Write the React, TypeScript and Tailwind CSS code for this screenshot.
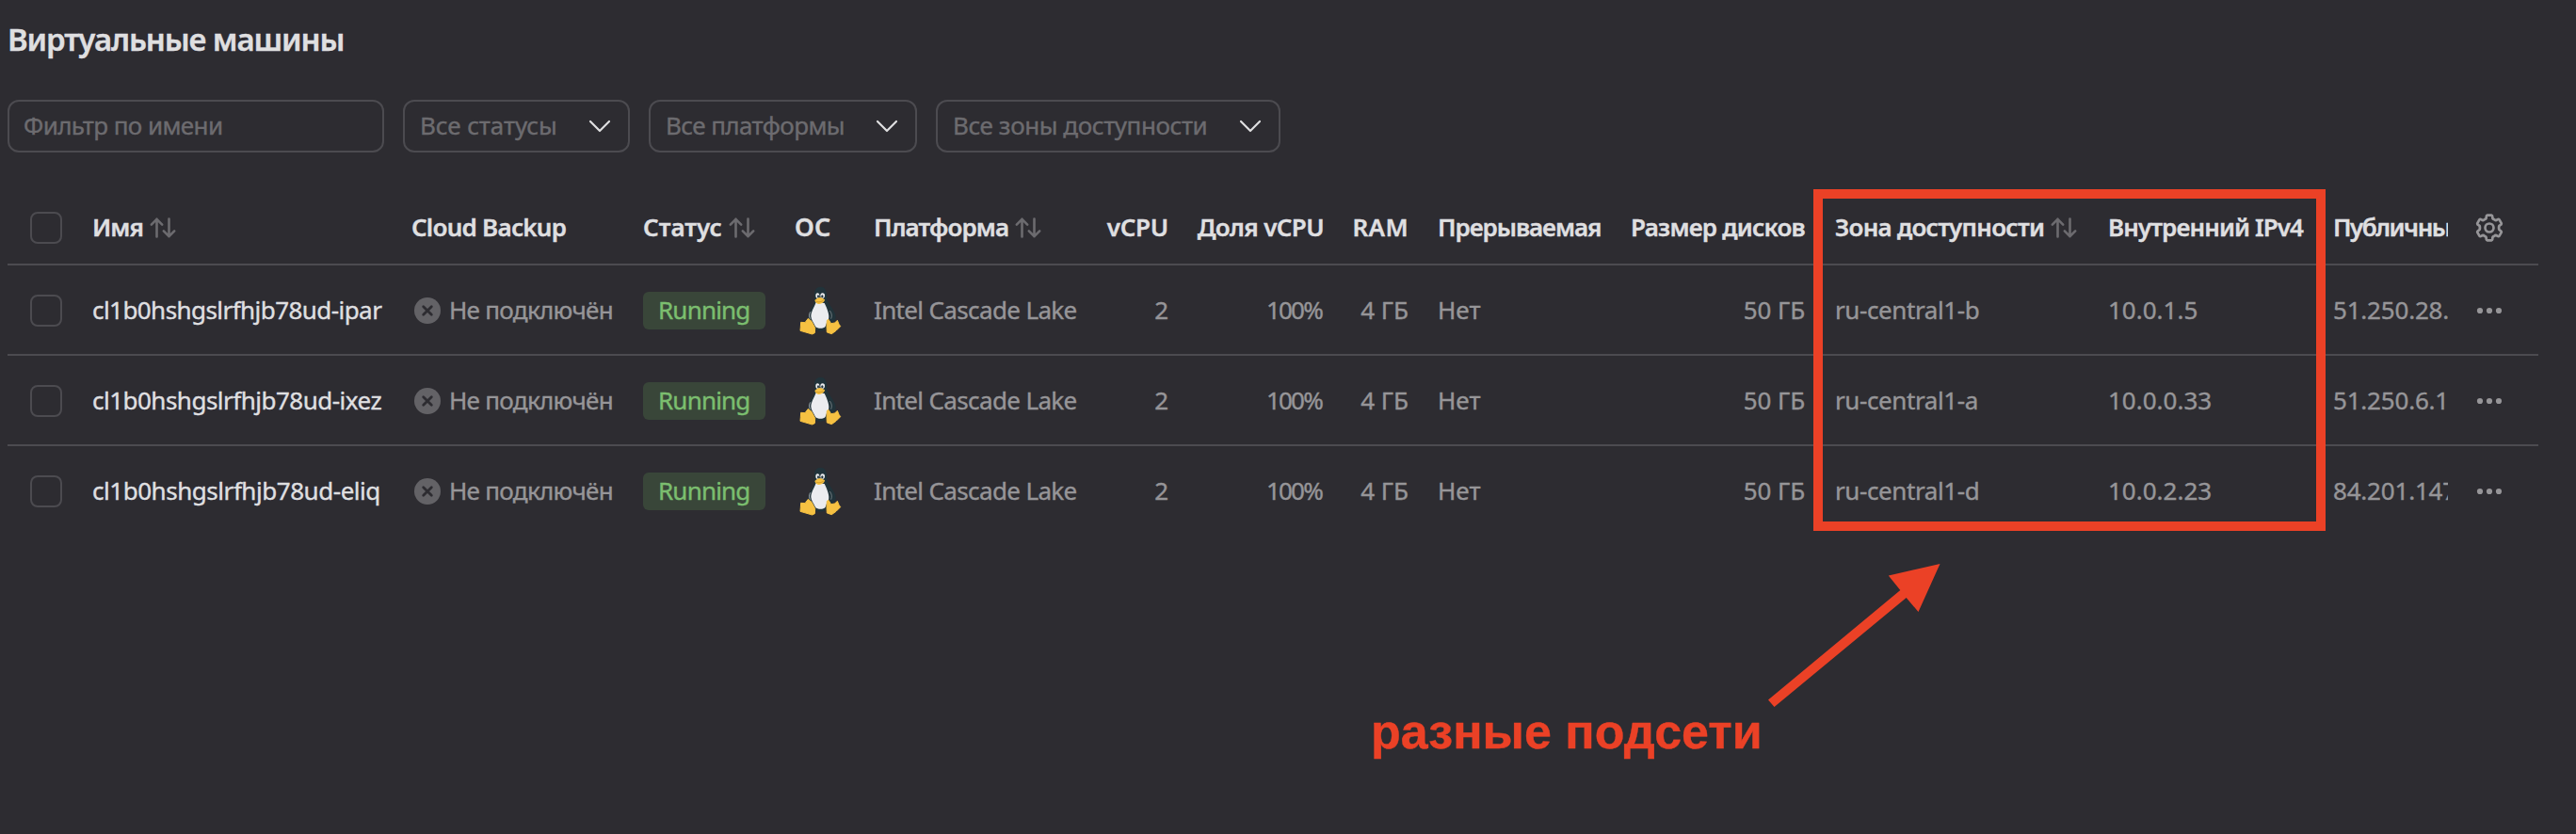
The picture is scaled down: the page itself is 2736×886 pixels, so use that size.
import type { ReactNode } from "react";
import clsx from "clsx";

const COLUMNS =
  "grid grid-cols-[90px_339px_246px_161px_84px_202px_111px_165px_90px_214px_207px_322px_239px_122px_96px] items-center pt-0.5";

const VMS = [
  { name: "cl1b0hshgslrfhjb78ud-ipar", tracking: "tracking-[-0.56px]", zone: "ru-central1-b", ip: "10.0.1.5", publicIp: "51.250.28." },
  { name: "cl1b0hshgslrfhjb78ud-ixez", tracking: "tracking-[-0.51px]", zone: "ru-central1-a", ip: "10.0.0.33", publicIp: "51.250.6.1" },
  { name: "cl1b0hshgslrfhjb78ud-eliq", tracking: "tracking-[-0.46px]", zone: "ru-central1-d", ip: "10.0.2.23", publicIp: "84.201.147" },
];

const FILTERS = [
  { label: "Все статусы", tracking: "tracking-[-0.1px]", width: "w-[241px]" },
  { label: "Все платформы", tracking: "tracking-[-0.6px]", width: "w-[285px]" },
  { label: "Все зоны доступности", tracking: "tracking-[-0.42px]", width: "w-[366px]" },
];

function Cell({ children, className }: { children: ReactNode; className?: string }) {
  return <div className={clsx("flex items-center pb-0.5 whitespace-nowrap", className)}>{children}</div>;
}

function Checkbox() {
  return <div className="ml-6 size-[34px] rounded-[8px] border-2 border-[#4c4b50]" />;
}

function SortIcon() {
  return (
    <svg
      className="mt-0.5 ml-1.5 h-6 w-[30px] shrink-0"
      viewBox="0 0 30 24"
      fill="none"
      stroke="#6c6b6f"
      strokeWidth="2.6"
      strokeLinecap="round"
      strokeLinejoin="round"
    >
      <path d="M8.5 21.5V2.8M2.8 8.6L8.5 2.8L14.2 8.6" />
      <path d="M21.5 2.5V21.2M15.8 15.4L21.5 21.2L27.2 15.4" />
    </svg>
  );
}

function Chevron() {
  return (
    <svg
      className="h-3.5 w-6"
      viewBox="0 0 24 14"
      fill="none"
      stroke="#dfdfe0"
      strokeWidth="2.2"
      strokeLinecap="round"
      strokeLinejoin="round"
    >
      <path d="M2 2L12 12L22 2" />
    </svg>
  );
}

function NotConnectedIcon() {
  return (
    <svg className="mt-0.5 size-7 shrink-0" viewBox="0 0 28 28">
      <circle cx="14" cy="14" r="14" fill="#636266" />
      <path d="M9.7 9.7L18.3 18.3M18.3 9.7L9.7 18.3" stroke="#2d2c31" strokeWidth="2.8" strokeLinecap="round" />
    </svg>
  );
}

function gearPath() {
  const at = (deg: number, r: number) => {
    const a = ((deg - 90) * Math.PI) / 180;
    return `${(16 + r * Math.cos(a)).toFixed(2)} ${(16 + r * Math.sin(a)).toFixed(2)}`;
  };
  let d = `M${at(-9, 13.6)}`;
  for (let k = 0; k < 6; k++) {
    const b = k * 60;
    d += `L${at(b + 9, 13.6)}Q${at(b + 14, 13.6)} ${at(b + 16, 12)}`;
    d += `Q${at(b + 18, 9.8)} ${at(b + 30, 10.2)}Q${at(b + 42, 9.8)} ${at(b + 44, 12)}`;
    d += `Q${at(b + 46, 13.6)} ${at(b + 51, 13.6)}`;
  }
  return `${d}Z`;
}

function GearIcon() {
  return (
    <svg className="ml-7 size-8" viewBox="0 0 32 32" fill="none" stroke="#969598" strokeWidth="2.7" strokeLinejoin="round">
      <path d={gearPath()} />
      <circle cx="16" cy="16" r="4.5" />
    </svg>
  );
}

function DotsIcon() {
  return (
    <svg className="ml-7 size-8" viewBox="0 0 32 32" fill="#969598">
      <circle cx="6" cy="16" r="3.1" />
      <circle cx="16" cy="16" r="3.1" />
      <circle cx="26" cy="16" r="3.1" />
    </svg>
  );
}

function Tux() {
  return (
    <svg className="-mt-0.5 -ml-1 h-[62px] w-[60px]" viewBox="0 0 180 186">
      <path
        d="M94 20C80 20 75 31 75 44C75 62 77 70 68 84C60 96 54 110 55 124L72 148C76 158 84 161 94 161C106 161 112 158 116 148L126 134C134 136 142 128 143 116C142 98 124 82 118 66C113 54 116 46 113 36C110 25 104 20 94 20Z"
        fill="#21333a"
      />
      <path
        d="M80 70C74 86 64 100 64 114C65 126 72 134 78 146C84 154 104 155 110 146C114 138 114 130 120 124C124 110 116 90 107 72Z"
        fill="#ebecef"
      />
      <path d="M62 100C58 108 57 116 62 122" stroke="#ebecef" strokeWidth="2" fill="none" />
      <path d="M124 96C130 104 132 112 128 122" stroke="#8f989c" strokeWidth="2" fill="none" />
      <ellipse cx="85" cy="48" rx="6" ry="8.5" fill="#ebecef" />
      <ellipse cx="101" cy="48" rx="7" ry="8.5" fill="#ebecef" />
      <ellipse cx="87" cy="50" rx="3" ry="4.5" fill="#21333a" />
      <ellipse cx="100" cy="50" rx="3.4" ry="4.5" fill="#21333a" />
      <path d="M76 63C82 58 88 54 93 54C98 54 103 58 108 61C108 68 98 75 90 75C83 75 77 70 76 63Z" fill="#f6c142" />
      <path d="M80 66C88 71 98 68 104 63" stroke="#b98318" strokeWidth="2" fill="none" />
      <g fill="#f6c142" stroke="#f6c142" strokeWidth="3" strokeLinejoin="round">
        <path d="M32 133L45 134L55 121L66 130L77 151L76 167L68 171L30 160L31 148Z" />
        <path d="M115 127L120 124L128 137L140 135L148 127L153 139L158 146L144 160L130 170L115 165L114 146Z" />
      </g>
    </svg>
  );
}

function Filters() {
  return (
    <div className="flex gap-5">
      <div className="flex h-14 w-[400px] items-center rounded-[12px] border-2 border-[#4c4b50] pb-0.5 pl-[15px] text-[#6c6b6f]">
        <span className="tracking-[-0.6px]">Фильтр по имени</span>
      </div>
      {FILTERS.map((f) => (
        <div
          key={f.label}
          className={clsx(
            "flex h-14 items-center justify-between rounded-[12px] border-2 border-[#4c4b50] pr-[18px] pl-4 text-[#6c6b6f]",
            f.width,
          )}
        >
          <span className={clsx("pb-0.5 whitespace-nowrap", f.tracking)}>{f.label}</span>
          <Chevron />
        </div>
      ))}
    </div>
  );
}

function TableHeader() {
  return (
    <div className={clsx(COLUMNS, "h-20 border-b-2 border-[#4c4b50] font-semibold text-[#dfdfe0]")}>
      <Checkbox />
      <Cell>
        <span className="tracking-[-0.9px]">Имя</span>
        <SortIcon />
      </Cell>
      <Cell className="tracking-[-0.75px]">Cloud Backup</Cell>
      <Cell>
        <span>Статус</span>
        <SortIcon />
      </Cell>
      <Cell className="text-[27px] tracking-[0.3px]">ОС</Cell>
      <Cell>
        <span className="tracking-[-0.9px]">Платформа</span>
        <SortIcon />
      </Cell>
      <Cell className="justify-end tracking-[-0.27px]">vCPU</Cell>
      <Cell className="justify-end tracking-[-0.61px]">Доля vCPU</Cell>
      <Cell className="justify-end tracking-[0.4px]">RAM</Cell>
      <Cell className="pl-[31px] tracking-[-1.05px]">Прерываемая</Cell>
      <Cell className="justify-end tracking-[-0.77px]">Размер дисков</Cell>
      <Cell className="pl-8">
        <span className="tracking-[-0.75px]">Зона доступности</span>
        <SortIcon />
      </Cell>
      <Cell className="tracking-[-0.9px]">Внутренний IPv4</Cell>
      <Cell className="overflow-hidden tracking-[-1.5px]">Публичны</Cell>
      <GearIcon />
    </div>
  );
}

function TableRow({ vm }: { vm: (typeof VMS)[number] }) {
  return (
    <div className={clsx(COLUMNS, "h-24 border-b-2 border-[#4c4b50] last:border-transparent")}>
      <Checkbox />
      <Cell className={clsx("text-[#dfdfe0]", vm.tracking)}>{vm.name}</Cell>
      <Cell className="gap-[9px] pl-[3px]">
        <NotConnectedIcon />
        <span className="tracking-[-0.7px]">Не подключён</span>
      </Cell>
      <div>
        <span className="flex h-10 w-[130px] items-center rounded-[6px] bg-[#394639] pb-0.5 pl-4 tracking-[-0.8px] text-[#7bbe6f]">
          Running
        </span>
      </div>
      <Tux />
      <Cell className="tracking-[-0.64px]">Intel Cascade Lake</Cell>
      <Cell className="justify-end">2</Cell>
      <Cell className="justify-end pr-0.5 tracking-[-1.8px]">100%</Cell>
      <Cell className="justify-end">4 ГБ</Cell>
      <Cell className="pl-[31px]">Нет</Cell>
      <Cell className="justify-end tracking-[-0.1px]">50 ГБ</Cell>
      <Cell className="pl-8 tracking-[-0.4px]">{vm.zone}</Cell>
      <Cell>{vm.ip}</Cell>
      <Cell className="overflow-hidden tracking-[-0.2px]">{vm.publicIp}</Cell>
      <DotsIcon />
    </div>
  );
}

export default function App() {
  return (
    <div className="relative h-[886px] w-[2736px] overflow-hidden bg-[#2d2c31] px-2 font-['Noto_Sans',sans-serif] text-[26px] leading-[36px] text-[#969598] [-webkit-text-stroke:0.4px]">
      <h1 className="h-[106px] pt-5 text-[33px] leading-[44px] font-semibold tracking-[-1.12px] text-[#dfdfe0]">
        Виртуальные машины
      </h1>
      <Filters />
      <div className="mt-10 w-[2688px]">
        <TableHeader />
        {VMS.map((vm) => (
          <TableRow key={vm.name} vm={vm} />
        ))}
      </div>

      <div className="absolute top-[201px] left-[1926px] h-[363px] w-[544px] border-[10px] border-[#eb4126]" />
      <svg className="absolute top-[590px] left-[1870px] h-[170px] w-[200px]" viewBox="1870 590 200 170">
        <path d="M2060.5 599L2037.5 650L2024.7 635L1884.5 751L1878 743.5L2018.3 627L2005.8 611.5Z" fill="#eb4126" />
      </svg>
      <div className="absolute top-[747px] left-[1456px] font-['Liberation_Sans',Arial,sans-serif] text-[52px] leading-[60px] font-bold whitespace-nowrap text-[#eb4126]">
        разные подсети
      </div>
    </div>
  );
}
